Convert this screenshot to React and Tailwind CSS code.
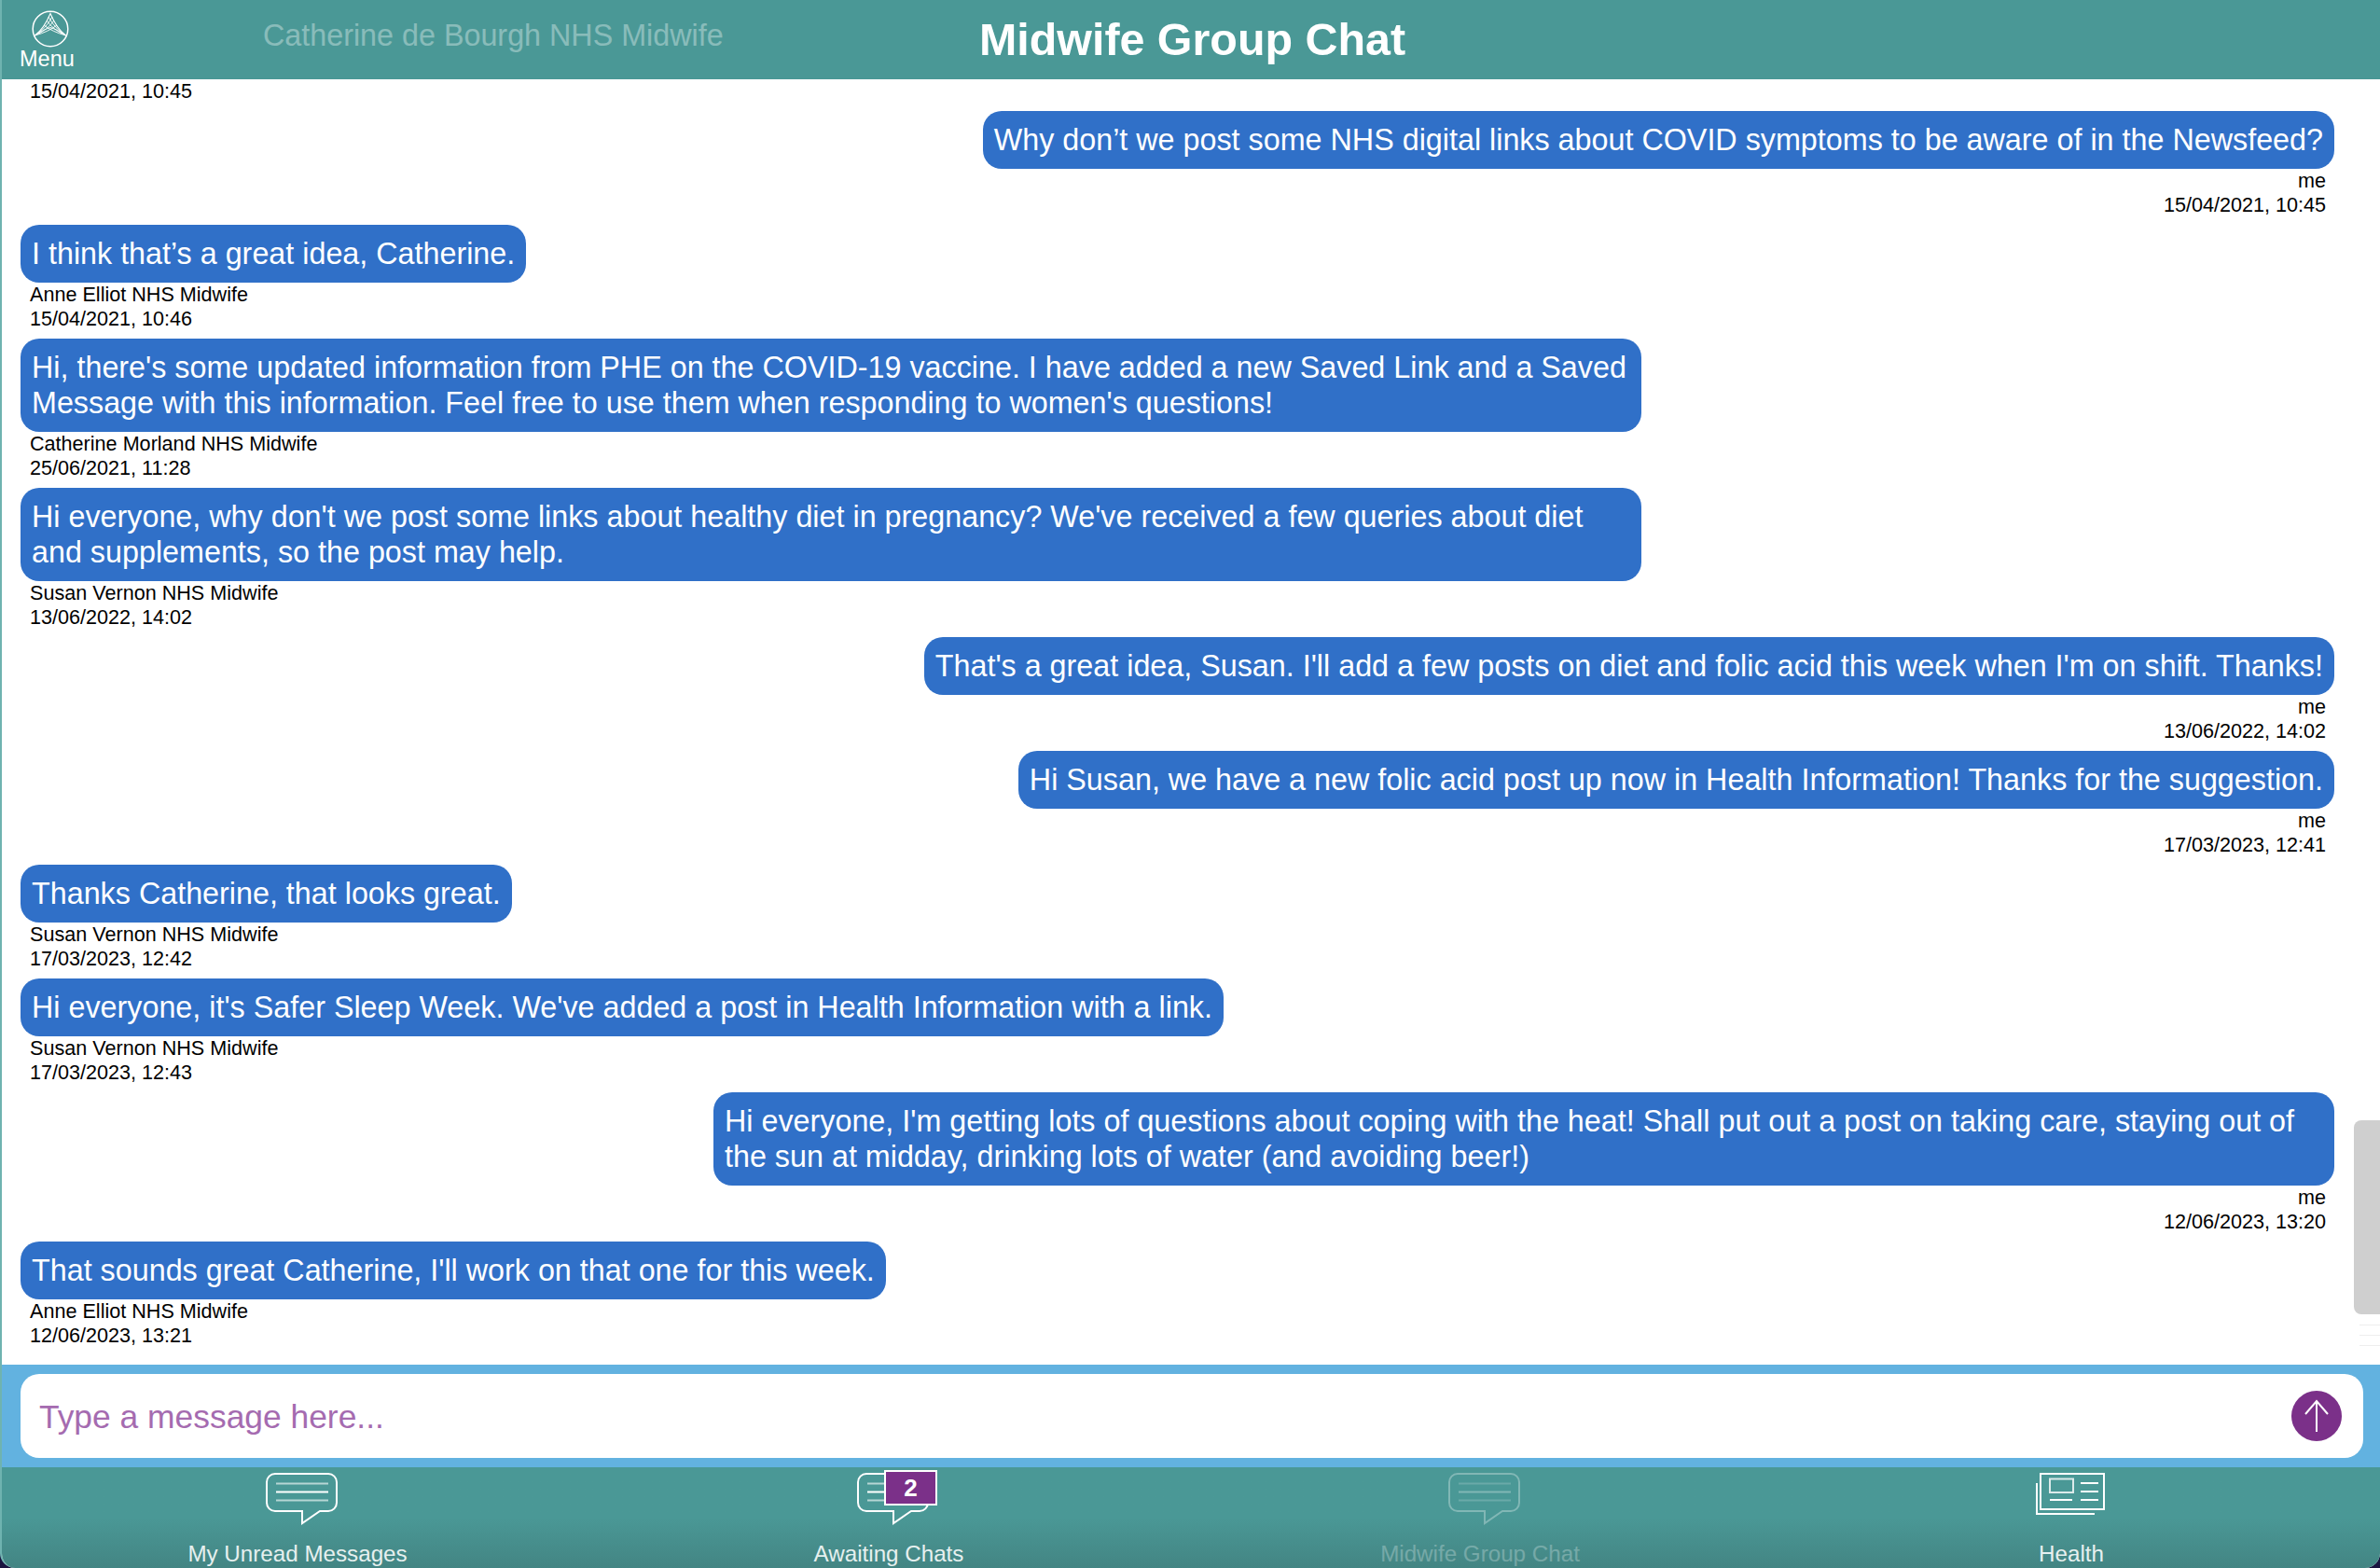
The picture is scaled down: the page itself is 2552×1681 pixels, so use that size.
import React from 'react';

const messages = [
  { mine: true, text: 'Why don’t we post some NHS digital links about COVID symptoms to be aware of in the Newsfeed?', who: 'me', time: '15/04/2021, 10:45' },
  { text: 'I think that’s a great idea, Catherine.', who: 'Anne Elliot NHS Midwife', time: '15/04/2021, 10:46' },
  { text: "Hi, there's some updated information from PHE on the COVID-19 vaccine. I have added a new Saved Link and a Saved Message with this information. Feel free to use them when responding to women's questions!", who: 'Catherine Morland NHS Midwife', time: '25/06/2021, 11:28' },
  { text: "Hi everyone, why don't we post some links about healthy diet in pregnancy? We've received a few queries about diet and supplements, so the post may help.", who: 'Susan Vernon NHS Midwife', time: '13/06/2022, 14:02' },
  { mine: true, text: "That's a great idea, Susan. I'll add a few posts on diet and folic acid this week when I'm on shift. Thanks!", who: 'me', time: '13/06/2022, 14:02' },
  { mine: true, text: 'Hi Susan, we have a new folic acid post up now in Health Information! Thanks for the suggestion.', who: 'me', time: '17/03/2023, 12:41' },
  { text: 'Thanks Catherine, that looks great.', who: 'Susan Vernon NHS Midwife', time: '17/03/2023, 12:42' },
  { text: "Hi everyone, it's Safer Sleep Week. We've added a post in Health Information with a link.", who: 'Susan Vernon NHS Midwife', time: '17/03/2023, 12:43' },
  { mine: true, text: "Hi everyone, I'm getting lots of questions about coping with the heat! Shall put out a post on taking care, staying out of the sun at midday, drinking lots of water (and avoiding beer!)", who: 'me', time: '12/06/2023, 13:20' },
  { text: "That sounds great Catherine, I'll work on that one for this week.", who: 'Anne Elliot NHS Midwife', time: '12/06/2023, 13:21' },
];

const ChatIcon = () => (
  <svg width="96" height="58" viewBox="0 0 96 58" fill="none" stroke="#fff" strokeWidth="2">
    <path d="M24 3H81a9 9 0 0 1 9 9V34a9 9 0 0 1-9 9H72L53 56V43H24a9 9 0 0 1-9-9V12a9 9 0 0 1 9-9Z" />
    <path d="M25 13.5H81M25 31.5H81" strokeOpacity="0.6" />
    <path d="M25 22.5H81" />
  </svg>
);

const NewsIcon = () => (
  <svg width="96" height="58" viewBox="0 0 96 58" fill="none" stroke="#fff" strokeWidth="2">
    <path d="M15 3H83V41H15Z" />
    <path d="M11 13V46H73" />
    <path d="M25 8.5H50V23H25Z" strokeOpacity="0.8" />
    <path d="M58 13H77M58 22H77M58 31H77M25 31H49" />
  </svg>
);

const Logo = () => (
  <svg width="40" height="40" viewBox="0 0 40 40" fill="none" stroke="#fff">
    <circle cx="20" cy="20" r="18.8" strokeWidth="1.5" />
    <g strokeWidth="0.9">
      <path d="M3.5 27Q13 20 20 3.5Q27 20 36.5 27" strokeWidth="1.1" />
      <path d="M3.5 27Q14 20 20 18.5Q26 20 36.5 27" />
      <path d="M3.5 27Q15 20 22 7M3.5 27Q17 21 24 11M3.5 27Q18 23 27 16" />
      <path d="M36.5 27Q25 20 18 7M36.5 27Q23 21 16 11M36.5 27Q22 23 13 16" />
    </g>
  </svg>
);

const NavItem = ({ icon, label, badge, dim }) => (
  <div className={`flex flex-col items-center pt-[4px] ${dim ? 'opacity-30' : ''}`}>
    <div className="relative h-[58px] w-[96px]">
      {icon}
      {badge && (
        <span className="absolute left-[43px] top-[-1px] flex h-[38px] w-[57px] items-center justify-center border-2 border-white bg-[#7b3089] text-[26px] font-bold text-white">
          {badge}
        </span>
      )}
    </div>
    <span className="mt-[17px] text-[24.2px] leading-[28px] text-[#e6f0ef]">{label}</span>
  </div>
);

const Message = ({ mine, text, who, time }) => (
  <div className={`flex flex-col pb-2 ${mine ? 'items-end' : 'items-start'}`}>
    <div className="max-w-[1738px] rounded-[20px] bg-[#3070c8] px-3 py-3 text-[32.3px] leading-[38px] text-white">
      {text}
    </div>
    <div className={`text-[21.6px] leading-[26px] text-black ${mine ? 'mr-[9px] text-right' : 'ml-[10px]'}`}>
      <div>{who}</div>
      <div>{time}</div>
    </div>
  </div>
);

export default function App() {
  return (
    <div className="h-screen overflow-hidden bg-[#1a1440] font-['Liberation_Sans',Arial,sans-serif]">
      <div className="flex h-full flex-col overflow-hidden rounded-b-[16px] border-l-2 border-[#6fb3b0] bg-white">
        <header className="flex h-[85px] shrink-0 items-start bg-[#4a9896] text-white">
          <div className="flex w-[280px] shrink-0 flex-col items-start pl-[19px] pt-[11px]">
            <div className="ml-[13px]"><Logo /></div>
            <span className="text-[23.5px] leading-[24px]">Menu</span>
          </div>
          <div className="w-[768px] shrink-0 pt-[18px] text-[32.3px] leading-[40px] opacity-35">Catherine de Bourgh NHS Midwife</div>
          <h1 className="pt-[16px] text-[48.4px] font-bold leading-[52px]">Midwife Group Chat</h1>
        </header>

        <div className="relative min-h-0 flex-1 overflow-hidden pl-[20px] pr-[49px]">
          <div className="pb-2 pl-[10px] text-[21.6px] leading-[26px] text-black">15/04/2021, 10:45</div>
          {messages.map((m, i) => <Message key={i} {...m} />)}
          {/* overlay scrollbar */}
          <div className="absolute right-0 top-[1116px] h-[208px] w-[28px] rounded-l-[8px] bg-[#cfcfcf]" />
          <div className="absolute right-0 top-[1335px] h-[1px] w-[22px] bg-[#eeeeee]" />
          <div className="absolute right-0 top-[1346px] h-[1px] w-[22px] bg-[#eeeeee]" />
          <div className="absolute right-0 top-[1357px] h-[1px] w-[22px] bg-[#eeeeee]" />
        </div>

        <div className="h-[110px] shrink-0 bg-[#62b2e0] py-[10px] pl-[20px] pr-[18px]">
          <div className="flex h-[90px] items-center justify-between rounded-[20px] bg-white pl-[20px] pr-[23px]">
            <span className="pt-[4px] text-[35.4px] text-[#a56bb0]">Type a message here...</span>
            <button className="flex h-[54px] w-[54px] items-center justify-center rounded-full bg-[#7b3089]">
              <svg width="30" height="36" viewBox="0 0 30 36" fill="none" stroke="#fff" strokeWidth="2">
                <path d="M15 35V2M3 16L15 2L27 16" />
              </svg>
            </button>
          </div>
        </div>

        <nav className="grid h-[108px] shrink-0 grid-cols-4 bg-gradient-to-b from-[#4a9896] from-50% to-[#438583] pr-[14px]">
          <NavItem icon={<ChatIcon />} label="My Unread Messages" />
          <NavItem icon={<ChatIcon />} label="Awaiting Chats" badge="2" />
          <NavItem icon={<ChatIcon />} label="Midwife Group Chat" dim />
          <NavItem icon={<NewsIcon />} label="Health" />
        </nav>
      </div>
    </div>
  );
}
